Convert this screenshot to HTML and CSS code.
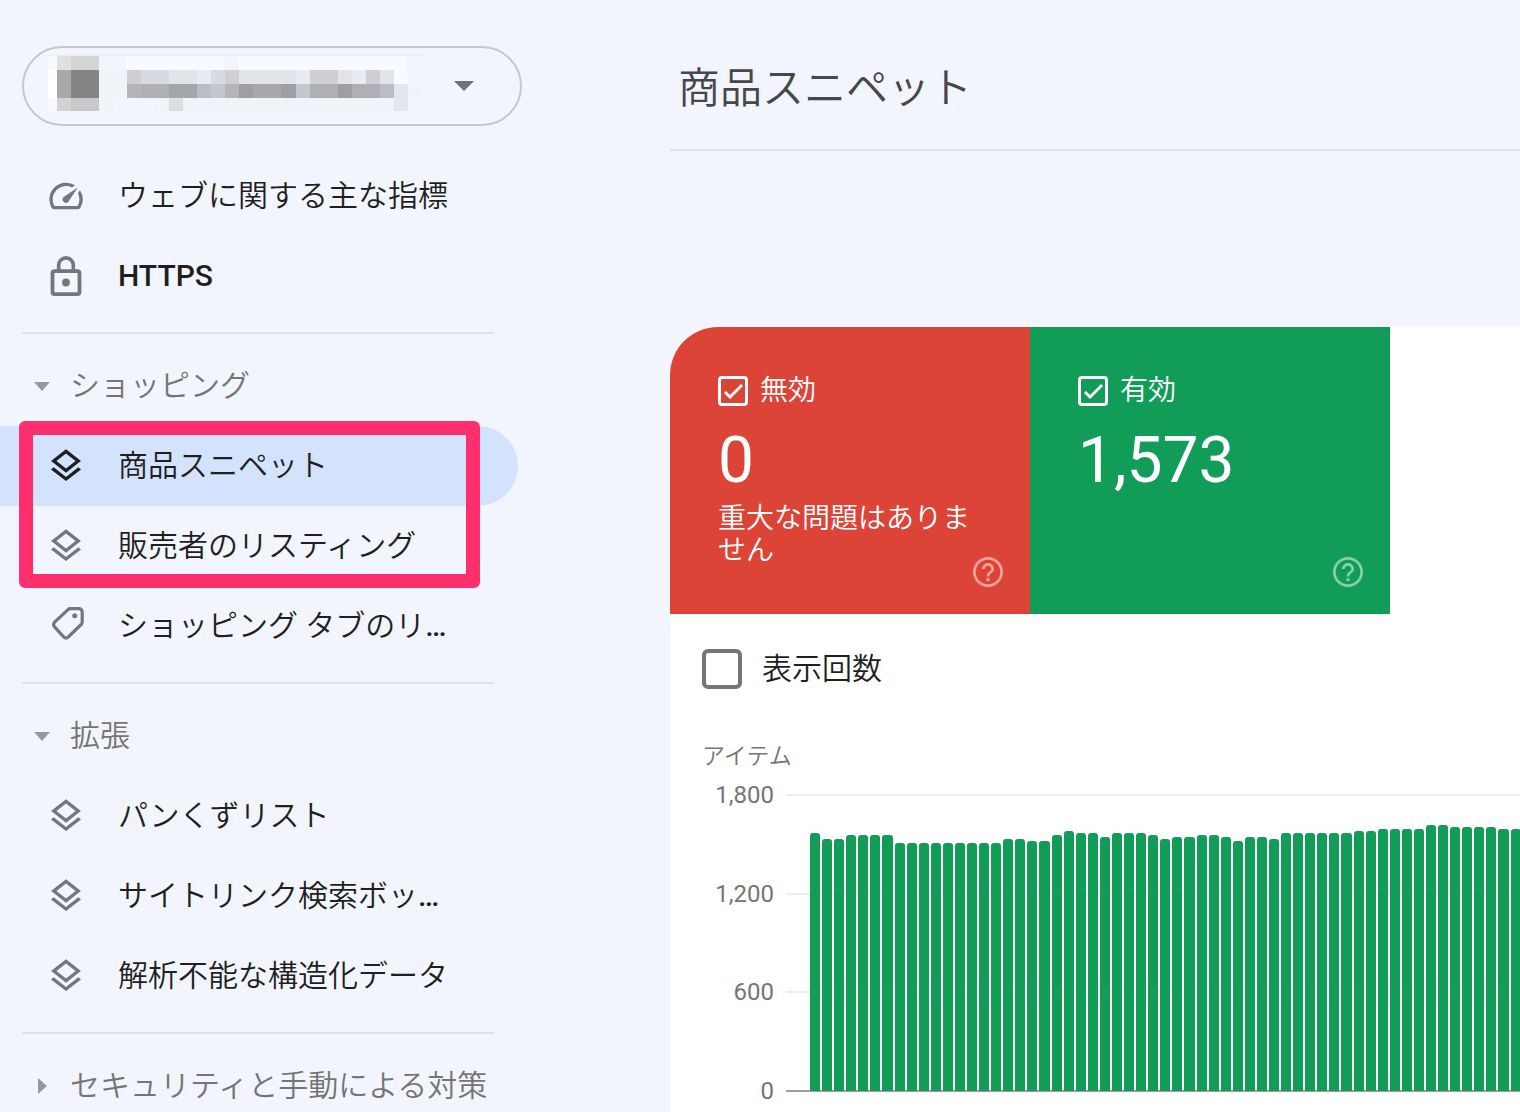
FILE: index.html
```html
<!DOCTYPE html>
<html lang="ja">
<head>
<meta charset="utf-8">
<meta name="viewport" content="width=device-width, initial-scale=1">
<title>商品スニペット</title>
<link rel="stylesheet" href="styles.css">
</head>
<body>
<svg class="sprite" aria-hidden="true">
  <symbol id="layers" viewBox="0 0 24 24"><path d="M11.99 18.54l-7.37-5.73L3 14.07l9 7 9-7-1.63-1.27-7.38 5.74zM12 16l7.36-5.73L21 9l-9-7-9 7 1.63 1.27L12 16zm0-11.47L17.74 9 12 13.47 6.26 9 12 4.53z"/></symbol>
  <symbol id="speed" viewBox="0 0 24 24"><path d="M20.38 8.57l-1.23 1.85a8 8 0 0 1-.22 7.58H5.07A8 8 0 0 1 15.58 6.85l1.85-1.23A10 10 0 0 0 3.35 19a2 2 0 0 0 1.72 1h13.85a2 2 0 0 0 1.74-1 10 10 0 0 0-.27-10.44zM10.59 15.41a2 2 0 0 0 2.83 0l5.66-8.49-8.49 5.66a2 2 0 0 0 0 2.83z"/></symbol>
  <symbol id="lock" viewBox="0 0 40 40"><rect x="6.5" y="15.2" width="27" height="22.9" rx="2" fill="none" stroke="currentColor" stroke-width="3.8"/><path d="M12.7 15V9.2a7.3 7.3 0 0 1 14.6 0V15" fill="none" stroke="currentColor" stroke-width="3.6"/><circle cx="20" cy="26.5" r="3.9"/></symbol>
  <symbol id="tag" viewBox="0 0 40 40"><path d="M24.4 2.7H33a3.2 3.2 0 0 1 3.2 3.2v10.2q0 1.4-1 2.4L22.2 31q-2.200 2-4.400 0L8.400 20.600q-1.700-2.100 0-4.200L22 3.700q1-1 2.400-1z" fill="none" stroke="currentColor" stroke-width="3.2"/><circle cx="28.700" cy="9.700" r="2.500"/></symbol>
  <symbol id="help" viewBox="2 2 20 20"><path d="M11 16.200h2v2h-2v-2zm1-14.200C6.480 2 2 6.480 2 12s4.480 10 10 10 10-4.480 10-10S17.520 2 12 2zm0 18.200c-4.530 0-8.200-3.670-8.200-8.200S7.470 3.800 12 3.800s8.200 3.670 8.200 8.200-3.670 8.200-8.200 8.200zM12 6c-2.210 0-4 1.790-4 4h1.800c0-1.210.99-2.200 2.200-2.200s2.200.99 2.200 2.200c0 2-3.100 1.750-3.100 5h1.800c0-2.250 3.100-2.500 3.100-5 0-2.210-1.790-4-4-4z"/></symbol>
</svg>

<div class="app">
  <aside class="sidebar">
    <button class="property" type="button" aria-label="プロパティを選択">
      <svg class="mosaic" viewBox="48 54 378 58" width="378" height="58" aria-hidden="true" shape-rendering="crispEdges">
        <path fill="#edf0f5" d="M48 54h378v2H48z"/>
        <path fill="#f7fbff" d="M126 56h98v14h-98zM238 56h168v14H238zM48 56h9v14h-9zM48 98h9v13h-9zM394 70h14v14h-14z"/>
        <path fill="#fff" d="M48 70h9v28h-9z"/>
        <path fill="#f0f3f8" d="M99 70h28v28H99zM99 98h14v13H99zM155 98h239v13H155zM408 84h14v14h-14z"/>
        <path fill="#e0e0e2" d="M57 56h14v14H57z"/><path fill="#d4d5d7" d="M71 56h28v14H71z"/>
        <path fill="#a8a8a8" d="M57 70h14v28H57z"/><path fill="#848483" d="M71 70h28v28H71z"/>
        <path fill="#d2d2d4" d="M57 98h14v13H57z"/><path fill="#c8c8ca" d="M71 98h28v13H71z"/>
        <path fill="#cfcfd1" d="M127 70h14v14h-14zM225 70h14v14h-14zM310 70h28v14h-28zM366 70h14v14h-14z"/>
        <path fill="#d7dae1" d="M141 70h28v14h-28zM211 70h14v14h-14z"/>
        <path fill="#e2e4e9" d="M169 70h28v14h-28zM239 70h57v14h-57zM338 70h14v14h-14zM380 70h14v14h-14z"/>
        <path fill="#e8ebf1" d="M197 70h14v14h-14zM296 70h14v14h-14zM352 70h14v14h-14z"/>
        <path fill="#b5b6ba" d="M127 84h14v14h-14zM225 84h14v14h-14z"/>
        <path fill="#aeb0b3" d="M141 84h28v14h-28zM310 84h28v14h-28zM352 84h28v14h-28z"/>
        <path fill="#a3a7aa" d="M169 84h28v14h-28z"/>
        <path fill="#b9bec5" d="M197 84h14v14h-14zM380 84h14v14h-14z"/>
        <path fill="#c3c7ce" d="M211 84h14v14h-14zM296 84h14v14h-14z"/>
        <path fill="#9e9ea3" d="M239 84h14v14h-14zM281 84h15v14h-15zM338 84h14v14h-14z"/>
        <path fill="#a8a8a9" d="M253 84h28v14h-28z"/>
        <path fill="#dddee2" d="M169 98h14v13h-14z"/>
        <path fill="#e3e6ea" d="M394 84h14v27h-14z"/>
      </svg>
      <svg class="caret" viewBox="0 0 20 10" aria-hidden="true"><path d="M0 0h20L10 10z"/></svg>
    </button>

    <nav class="nav" aria-label="レポート">
      <a class="item" href="#vitals"><svg class="icon"><use href="#speed"/></svg><span>ウェブに関する主な指標</span></a>
      <a class="item" href="#https"><svg class="icon"><use href="#lock"/></svg><span class="strong">HTTPS</span></a>
      <hr class="rule">
      <button class="section" type="button" aria-expanded="true"><svg class="twist" viewBox="0 0 16 16"><path d="M0 4h16l-8 9z"/></svg>ショッピング</button>
      <div class="marked">
        <a class="item active" href="#snippets" aria-current="page"><svg class="icon"><use href="#layers"/></svg><span>商品スニペット</span></a>
        <a class="item" href="#listings"><svg class="icon"><use href="#layers"/></svg><span>販売者のリスティング</span></a>
      </div>
      <a class="item" href="#tab"><svg class="icon"><use href="#tag"/></svg><span>ショッピング タブのリ<b class="strong">…</b></span></a>
      <hr class="rule">
      <button class="section" type="button" aria-expanded="true"><svg class="twist" viewBox="0 0 16 16"><path d="M0 4h16l-8 9z"/></svg>拡張</button>
      <a class="item" href="#breadcrumbs"><svg class="icon"><use href="#layers"/></svg><span>パンくずリスト</span></a>
      <a class="item" href="#searchbox"><svg class="icon"><use href="#layers"/></svg><span>サイトリンク検索ボッ<b class="strong">…</b></span></a>
      <a class="item" href="#unparsable"><svg class="icon"><use href="#layers"/></svg><span>解析不能な構造化データ</span></a>
      <hr class="rule">
      <button class="section" type="button" aria-expanded="false"><svg class="twist" viewBox="0 0 16 16"><path d="M4 0v16l9-8z"/></svg>セキュリティと手動による対策</button>
    </nav>
  </aside>

  <main class="main">
    <header class="header"><h1>商品スニペット</h1></header>
    <section class="panel">
      <div class="cards">
        <div class="card invalid">
          <label class="card-label"><input class="check" type="checkbox" checked>無効</label>
          <div class="count">0</div>
          <p class="note">重大な問題はありません</p>
          <button class="help" type="button" aria-label="無効のヘルプ"><svg><use href="#help"/></svg></button>
        </div>
        <div class="card valid">
          <label class="card-label"><input class="check" type="checkbox" checked>有効</label>
          <div class="count">1,573</div>
          <button class="help" type="button" aria-label="有効のヘルプ"><svg><use href="#help"/></svg></button>
        </div>
      </div>
      <label class="impressions"><input class="box" type="checkbox">表示回数</label>
      <div class="chart">
        <div class="chart-title">アイテム</div>
        <div class="scale"><span>1,800</span><span>1,200</span><span>600</span><span>0</span></div>
        <div class="lines"><i></i><i></i><i></i><i class="axis"></i></div>
        <div class="bars">
          <i style="height:258px"></i><i style="height:252px"></i><i style="height:252px"></i><i style="height:256px"></i><i style="height:256px"></i><i style="height:256px"></i><i style="height:256px"></i><i style="height:248px"></i><i style="height:248px"></i><i style="height:248px"></i>
          <i style="height:248px"></i><i style="height:248px"></i><i style="height:248px"></i><i style="height:248px"></i><i style="height:248px"></i><i style="height:248px"></i><i style="height:252px"></i><i style="height:252px"></i><i style="height:250px"></i><i style="height:250px"></i>
          <i style="height:256px"></i><i style="height:260px"></i><i style="height:258px"></i><i style="height:258px"></i><i style="height:254px"></i><i style="height:258px"></i><i style="height:258px"></i><i style="height:258px"></i><i style="height:256px"></i><i style="height:252px"></i>
          <i style="height:254px"></i><i style="height:254px"></i><i style="height:256px"></i><i style="height:256px"></i><i style="height:254px"></i><i style="height:250px"></i><i style="height:254px"></i><i style="height:254px"></i><i style="height:252px"></i><i style="height:258px"></i>
          <i style="height:258px"></i><i style="height:258px"></i><i style="height:258px"></i><i style="height:258px"></i><i style="height:258px"></i><i style="height:260px"></i><i style="height:260px"></i><i style="height:262px"></i><i style="height:262px"></i><i style="height:262px"></i>
          <i style="height:262px"></i><i style="height:266px"></i><i style="height:266px"></i><i style="height:264px"></i><i style="height:264px"></i><i style="height:264px"></i><i style="height:264px"></i><i style="height:262px"></i><i style="height:262px"></i>
        </div>
      </div>
    </section>
  </main>
</div>
</body>
</html>
```
FILE: styles.css
```css
*, *::before, *::after { box-sizing: border-box; }

body {
  margin: 0;
  background: #f2f5fd;
  color: #1f1f1f;
  font: 350 30px/40px Roboto, "Noto Sans CJK JP", sans-serif;
}

button {
  margin: 0;
  padding: 0;
  border: 0;
  background: none;
  color: inherit;
  font: inherit;
  text-align: left;
}

svg { display: block; fill: currentColor; }
.sprite { display: none; }

.app {
  display: grid;
  grid-template-columns: 522px minmax(0, 1fr);
  column-gap: 148px;
  height: 100vh;
  overflow: hidden;
}

/* Sidebar */
.sidebar { padding-top: 46px; }

.property {
  display: flex;
  align-items: center;
  width: 500px;
  height: 80px;
  margin: 0 0 30px 22px;
  padding: 0 46px 0 24px;
  border: 2px solid #c7c7c7;
  border-radius: 40px;
}
.mosaic { flex: none; margin-bottom: 6px; }
.caret { width: 20px; height: 10px; margin-left: auto; color: #6e7175; }

.item {
  display: flex;
  align-items: center;
  gap: 32px;
  width: 518px;
  height: 80px;
  padding-left: 46px;
  border-radius: 0 40px 40px 0;
  color: #1f1f1f;
  text-decoration: none;
  white-space: nowrap;
}
.icon { flex: none; width: 40px; height: 40px; color: #747679; }
.active { background: #d3e3fd; }
.active .icon { color: #1f1f1f; }
.strong { font-weight: 500; }

.rule {
  width: 472px;
  height: 2px;
  margin: 16px 0 12px 22px;
  border: 0;
  background: #e2e2e2;
}

.section {
  display: flex;
  align-items: center;
  gap: 20px;
  height: 80px;
  padding-left: 34px;
  color: #757575;
  white-space: nowrap;
}
.twist { width: 16px; height: 16px; color: #97999d; }

.marked { position: relative; }
.marked::after {
  content: "";
  position: absolute;
  inset: -5px 42px -2px 19px;
  border: 14px solid #ff2e6c;
  border-radius: 6px;
  pointer-events: none;
}

/* Report */
.main { display: flex; flex-direction: column; }

.header {
  height: 151px;
  padding: 59px 0 0 8px;
  border-bottom: 2px solid #e0e2e0;
}
h1 {
  margin: 0;
  color: #474747;
  font-size: 42px;
  line-height: 60px;
  font-weight: 350;
}

.panel {
  flex: 1;
  margin-top: 176px;
  border-top-left-radius: 48px;
  background: #fff;
  overflow: hidden;
}

.cards { display: flex; }
.card {
  position: relative;
  width: 360px;
  min-height: 287px;
  padding: 49px 48px 47px;
  color: #fff;
  font-size: 28px;
  line-height: 32px;
}
.invalid { background: #dc4437; }
.valid { background: #119d58; }
.card-label { display: flex; align-items: center; gap: 12px; height: 30px; }
.count {
  margin: 23px 0 10px;
  font-size: 64px;
  line-height: 64px;
  font-weight: 400;
}
.note { margin: 0; }
.help { position: absolute; right: 27px; bottom: 27px; opacity: .5; }
.help svg { width: 30px; height: 30px; }

.check, .box { appearance: none; flex: none; margin: 0; }
.check {
  width: 30px;
  height: 30px;
  border: 3px solid #fff;
  border-radius: 4px;
}
.check:checked::before {
  content: "";
  display: block;
  height: 24px;
  background: #fff;
  clip-path: polygon(3px 14px, 5px 12px, 9px 16px, 20px 5px, 22px 7px, 9px 20px);
}
.box {
  width: 40px;
  height: 40px;
  border: 4px solid #757575;
  border-radius: 6px;
}

.impressions {
  display: flex;
  align-items: center;
  gap: 20px;
  margin: 35px 0 56px 32px;
}

.chart {
  display: grid;
  grid-template-columns: 72px minmax(0, 1fr);
  grid-template-rows: 24px 320px;
  gap: 14px 12px;
  padding-left: 32px;
  color: #757575;
  font-size: 24px;
  line-height: 24px;
  font-weight: 400;
}
.chart-title { grid-column: 1 / -1; font-size: 23px; font-weight: 350; }
.scale {
  display: flex;
  flex-direction: column;
  justify-content: space-between;
  text-align: right;
}
.lines, .bars { grid-area: 2 / 2; display: flex; }
.lines {
  flex-direction: column;
  justify-content: space-between;
  margin: 11px 0;
}
.lines i { height: 2px; background: #eee; }
.lines .axis { background: #9e9e9e; }
.bars {
  align-items: flex-end;
  gap: 2px;
  margin: 11px -1px 12px 24px;
}
.bars i {
  flex: 1;
  border-radius: 3px 3px 0 0;
  background: #119d58;
}
```
